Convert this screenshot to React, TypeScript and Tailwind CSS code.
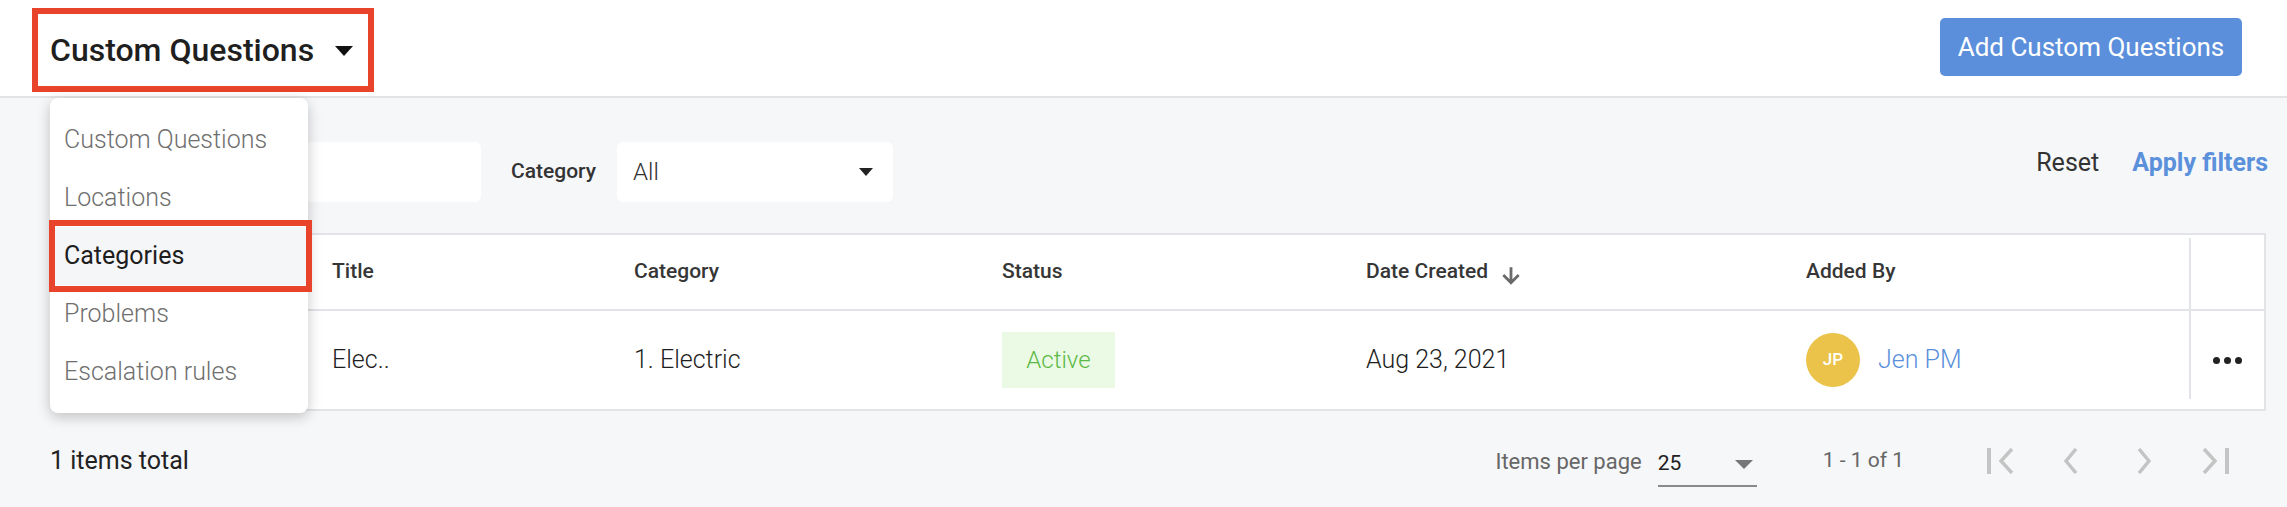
import React from "react";

const Caret = ({ w, h, color }: { w: number; h: number; color: string }) => (
  <svg width={w} height={h} viewBox={`0 0 ${w} ${h}`}>
    <polygon points={`0,0 ${w},0 ${w / 2},${h}`} fill={color} />
  </svg>
);

const menuItems = ["Custom Questions", "Locations", "Categories", "Problems", "Escalation rules"];

export default function App() {
  return (
    <div className="relative w-[2287px] h-[507px] overflow-hidden bg-[#f6f7f9] font-['Roboto',sans-serif]">
      {/* Header */}
      <div className="flex items-start justify-between h-[98px] bg-white border-b-2 border-[#e3e3e3] pl-[32px] pr-[45px]">
        <div className="mt-[8px] flex items-center h-[84px] w-[342px] border-[6px] border-[#e8432b] pl-[12px]">
          <span className="text-[32px] leading-[40px] font-medium text-[#1f1f1f]">Custom Questions</span>
          <span className="ml-[21px] mt-[2px]">
            <Caret w={18} h={10} color="#111111" />
          </span>
        </div>
        <button className="mt-[18px] w-[302px] h-[58px] rounded-[5px] bg-[#5b8fdb] text-white text-[26px] leading-[30px]">
          Add Custom Questions
        </button>
      </div>

      {/* Filters */}
      <div className="flex items-start h-[135px] pt-[44px] pl-[60px] pr-[19px]">
        <div className="w-[421px] h-[60px] rounded-[6px] bg-white" />
        <div className="ml-[30px] h-[60px] flex items-center text-[21px] font-medium text-[#333333]">Category</div>
        <div className="ml-[21px] w-[276px] h-[60px] rounded-[6px] bg-white flex items-center justify-between pl-[16px] pr-[20px]">
          <span className="text-[24px] font-light text-[#333333]">All</span>
          <Caret w={14} h={8} color="#222222" />
        </div>
        <div className="flex-1" />
        <div className="mt-[6px] flex items-center h-[30px]">
          <span className="text-[25px] leading-[30px] text-[#333333]">Reset</span>
          <span className="ml-[33px] text-[25px] leading-[30px] font-bold text-[#5b90db]">Apply filters</span>
        </div>
      </div>

      {/* Table */}
      <div className="ml-[60px] mr-[21px] h-[178px] bg-white border-2 border-[#e2e4e7]">
        <div className="grid grid-cols-[270px_302px_368px_364px_440px_383px_1fr] h-[76px] border-b-2 border-[#e2e4e7] text-[21px] font-medium text-[#363636]">
          <div />
          <div className="flex items-center">Title</div>
          <div className="flex items-center">Category</div>
          <div className="flex items-center">Status</div>
          <div className="flex items-center">
            Date Created
            <svg className="ml-[10px] mt-[8px]" width="26" height="26" viewBox="0 0 24 24">
              <path d="M20 12l-1.8-1.8L13.3 15.1V4h-2.6v11.1L5.8 10.2 4 12l8 8 8-8z" fill="#6a6a6a" />
            </svg>
          </div>
          <div className="flex items-center">Added By</div>
          <div className="mt-[3px] border-l-2 border-[#e2e4e7]" />
        </div>
        <div className="grid grid-cols-[270px_302px_368px_364px_440px_383px_1fr] h-[98px] text-[25px] font-light text-[#1e1e1e]">
          <div />
          <div className="flex items-center">Elec..</div>
          <div className="flex items-center">1. Electric</div>
          <div className="flex items-center">
            <div className="w-[113px] h-[56px] bg-[#eafae5] text-[#5cb946] text-[24px] flex items-center justify-center">Active</div>
          </div>
          <div className="flex items-center">Aug 23, 2021</div>
          <div className="flex items-center">
            <div className="w-[54px] h-[54px] rounded-full bg-[#ebc34a] text-white text-[17px] font-medium flex items-center justify-center">JP</div>
            <span className="ml-[18px] text-[25px] text-[#5b90db]">Jen PM</span>
          </div>
          <div className="mb-[10px] border-l-2 border-[#e2e4e7] flex items-center justify-center pt-[10px]">
            <div className="flex gap-[4px]">
              <span className="w-[7px] h-[7px] rounded-full bg-[#222222]" />
              <span className="w-[7px] h-[7px] rounded-full bg-[#222222]" />
              <span className="w-[7px] h-[7px] rounded-full bg-[#222222]" />
            </div>
          </div>
        </div>
      </div>

      {/* Footer */}
      <div className="flex items-center h-[96px] pt-[4px] pl-[50px] pr-[58px]">
        <span className="text-[25px] text-[#222222]">1 items total</span>
        <div className="flex-1" />
        <span className="text-[22px] text-[#666666]">Items per page</span>
        <div className="ml-[16px] w-[99px] h-[44px] border-b-2 border-[#8a8a8a] flex items-center justify-between pr-[4px] mt-[8px]">
          <span className="text-[21px] text-[#222222]">25</span>
          <Caret w={18} h={9} color="#777777" />
        </div>
        <span className="ml-[66px] text-[21px] text-[#666666]">1 - 1 of 1</span>
        <div className="ml-[83px] flex items-center">
          <svg width="27" height="26" viewBox="0 0 27 26">
            <rect x="0" y="0" width="4" height="26" fill="#c4c4c4" />
            <polyline points="25,1 14,13 25,25" fill="none" stroke="#c4c4c4" strokeWidth="3.5" />
          </svg>
          <svg className="ml-[50px]" width="14" height="26" viewBox="0 0 14 26">
            <polyline points="12,1 2,13 12,25" fill="none" stroke="#c4c4c4" strokeWidth="3.5" />
          </svg>
          <svg className="ml-[59px]" width="14" height="26" viewBox="0 0 14 26">
            <polyline points="2,1 12,13 2,25" fill="none" stroke="#c4c4c4" strokeWidth="3.5" />
          </svg>
          <svg className="ml-[51px]" width="27" height="26" viewBox="0 0 27 26">
            <polyline points="2,1 13,13 2,25" fill="none" stroke="#c4c4c4" strokeWidth="3.5" />
            <rect x="23" y="0" width="4" height="26" fill="#c4c4c4" />
          </svg>
        </div>
      </div>

      {/* Dropdown menu */}
      <div className="absolute left-[50px] top-[98px] w-[258px] h-[315px] bg-white rounded-[8px] shadow-[0_4px_14px_rgba(0,0,0,0.22)] pt-[13px]">
        {menuItems.map((item) =>
          item === "Categories" ? (
            <div key={item} className="relative h-[58px] flex items-center pl-[14px] bg-[#f5f6f8] text-[25px] text-[#1e1e1e]">
              {item}
              <div className="absolute left-[-1px] right-[-4px] top-[-7px] bottom-[-7px] border-[6px] border-[#e8432b]" />
            </div>
          ) : (
            <div key={item} className="h-[58px] flex items-center pl-[14px] text-[25px] font-light text-[#6f6f6f]">
              {item}
            </div>
          )
        )}
      </div>
    </div>
  );
}
